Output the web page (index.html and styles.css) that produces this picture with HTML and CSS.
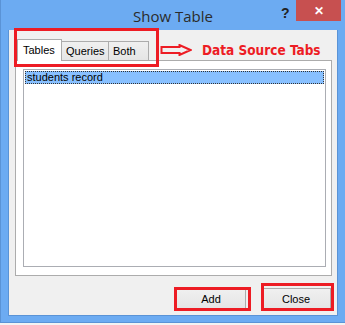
FILE: index.html
```html
<!DOCTYPE html>
<html lang="en">
<head>
  <meta charset="UTF-8" />
  <title>Show Table</title>
  <link rel="stylesheet" href="styles.css">
</head>
<body>
  <div class="window">
    <div class="titlebar">
      <span class="title">Show Table</span>
      <span class="help">?</span>
      <button class="close-x">&#x2715;</button>
    </div>
    <div class="client">
      <div class="tabs">
        <div class="tab tab-tables active">Tables</div>
        <div class="tab tab-queries">Queries</div>
        <div class="tab tab-both">Both</div>
      </div>
      <div class="panel">
        <div class="listbox">
          <div class="row selected">students record</div>
        </div>
      </div>
      <div class="actions">
        <button class="btn">Add</button>
        <button class="btn">Close</button>
      </div>

      <!-- annotations over the dialog -->
      <div class="mark mark-tabs"></div>
      <div class="note">
        <svg class="arrow" width="32" height="12" viewBox="0 0 32 12">
          <path d="M1.5 3 H19.5 V1 L30.5 6 L19.5 11 V9 H1.5 Z" fill="none" stroke="#ed1c24" stroke-width="2"/>
        </svg>
        <span>Data Source Tabs</span>
      </div>
      <div class="mark mark-add"></div>
      <div class="mark mark-close"></div>
    </div>
  </div>
</body>
</html>
```

FILE: styles.css
```css
body {
  margin: 0;
  background: #f3f3f3;
  font-family: "Liberation Sans", Arial, sans-serif;
}
.window {
  width: 345px;
  height: 323px;
  box-sizing: border-box;
  background: #6cabf2;
  border: 1px solid #5a93d6;
  border-top: none;
  border-right: none;
  display: flex;
  flex-direction: column;
}
.titlebar {
  height: 30px;
  position: relative;
  display: flex;
  justify-content: center;
  align-items: center;
}
.title {
  font-family: "Open Sans", sans-serif;
  font-size: 15px;
  color: #2b2b2b;
  padding-top: 1px;
}
.help {
  position: absolute;
  left: 280px;
  top: 5px;
  font-size: 14px;
  font-weight: bold;
  color: #222;
}
.close-x {
  position: absolute;
  left: 295px;
  top: 0;
  width: 45px;
  height: 21px;
  border: none;
  padding: 0;
  background: #c75050;
  color: #fff;
  font-size: 12px;
  font-weight: bold;
}
.client {
  position: relative;
  flex: 1;
  margin: 0 7px 6px 7px;
  background: #f0f0f0;
  border: 1px solid #5a93d6;
  border-top: none;
  padding: 8px 5px 0 6px;
}
.tabs {
  display: flex;
  align-items: flex-end;
  padding-left: 2px;
  height: 22px;
}
.tab {
  font-size: 11px;
  color: #000;
  height: 18px;
  line-height: 19px;
  box-sizing: content-box;
  padding-left: 4px;
  background: linear-gradient(#f0f0f0, #e5e5e5);
  border: 1px solid #acacac;
  border-bottom: none;
  margin-right: -1px;
}
.tab-tables { width: 38px; padding-left: 5px; }
.tab-queries { width: 42px; }
.tab-both { width: 35px; }
.tab.active {
  height: 21px;
  line-height: 20px;
  background: #fff;
  position: relative;
  z-index: 1;
  margin-bottom: -1px;
}
.panel {
  height: 216px;
  box-sizing: border-box;
  background: #fff;
  border: 1px solid #acacac;
  padding: 8px 5px 8px 7px;
}
.listbox {
  height: 100%;
  box-sizing: border-box;
  border: 1px solid #abadb3;
  padding: 1px;
}
.row {
  font-size: 11px;
  height: 13px;
  line-height: 13px;
  padding-left: 2px;
  color: #000;
}
.row.selected {
  background: #88c0ff;
  outline: 1px dotted #333;
  outline-offset: -1px;
}
.actions {
  display: flex;
  justify-content: flex-end;
  gap: 15px;
  margin-top: 12px;
  padding-right: 1px;
}
.btn {
  width: 70px;
  height: 21px;
  font-family: "Liberation Sans", Arial, sans-serif;
  font-size: 11px;
  color: #000;
  background: linear-gradient(#f0f0f0, #e5e5e5);
  border: 1px solid #acacac;
  padding: 0;
}
.mark {
  position: absolute;
  border: 3px solid #ed1c24;
  box-sizing: border-box;
}
.mark-tabs { left: 5px; top: -2px; width: 145px; height: 39px; }
.mark-add { left: 165px; top: 257px; width: 77px; height: 24px; }
.mark-close { left: 252px; top: 253px; width: 73px; height: 28px; }
.note {
  position: absolute;
  left: 151px;
  top: 12px;
  display: flex;
  align-items: center;
  gap: 10px;
  color: #ed1c24;
  font-family: "DejaVu Sans Condensed", "DejaVu Sans", Verdana, sans-serif;
  font-stretch: condensed;
  font-weight: bold;
  font-size: 13.5px;
}
```
